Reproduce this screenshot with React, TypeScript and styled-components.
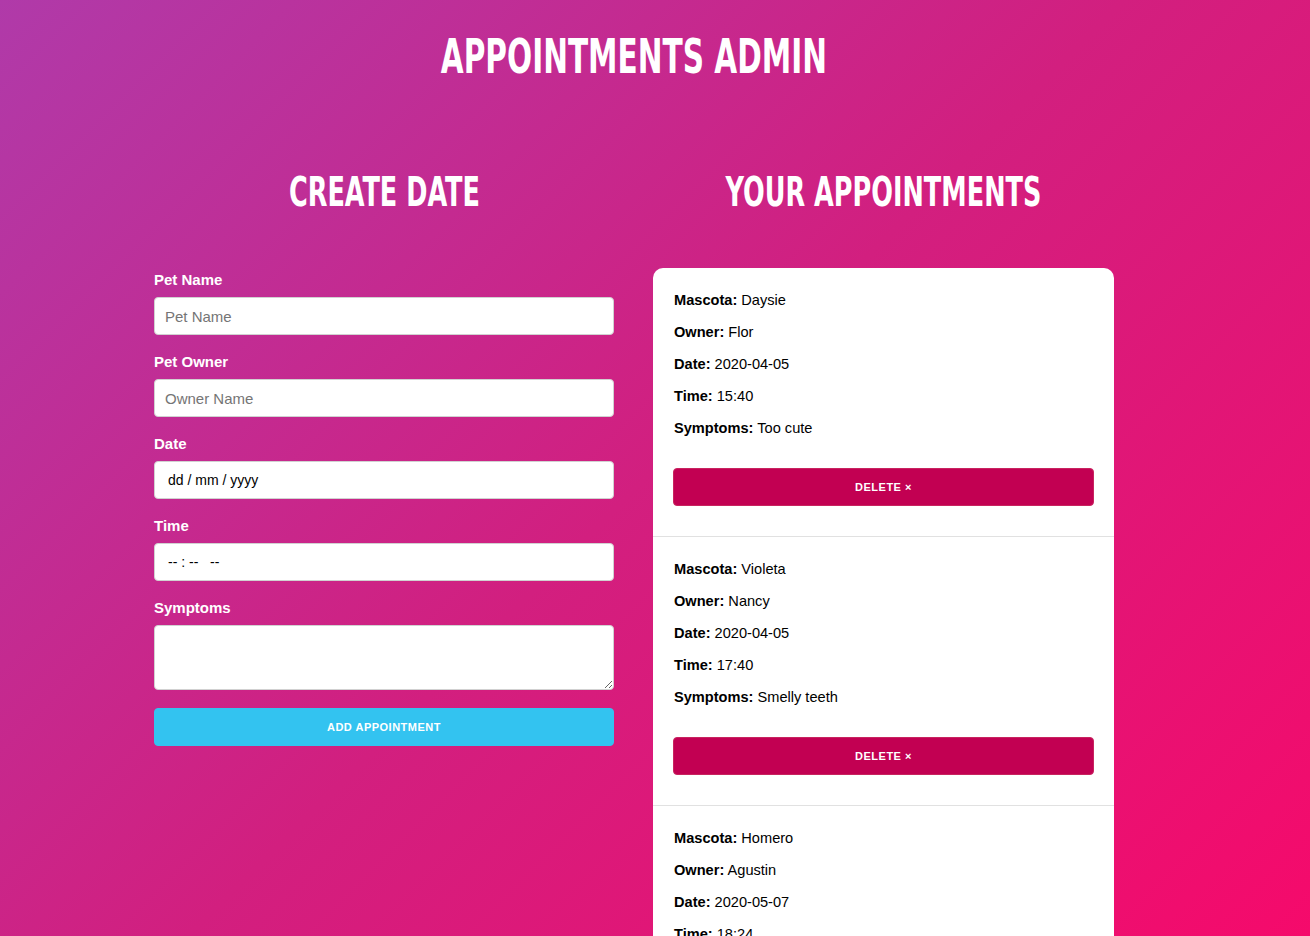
import React from "react";
import styled, { createGlobalStyle } from "styled-components";

const GlobalStyle = createGlobalStyle`
  html, body {
    margin: 0;
    padding: 0;
  }
  body {
    min-height: 100vh;
    font-family: "Liberation Sans", Arial, sans-serif;
    font-size: 15px;
    color: #222;
    background: linear-gradient(135deg, #b03aa9 0%, #d21f7f 50%, #f50a6b 100%);
    background-attachment: fixed;
  }
  * { box-sizing: border-box; }
`;

const Container = styled.div`
  width: 960px;
  margin-left: 154px;
  padding-top: 32px;
  padding-bottom: 40px;
`;

const Title = styled.h1`
  margin: 0;
  text-align: center;
  color: #fff;
  font-family: "Liberation Sans Narrow", "DejaVu Sans Condensed", "Liberation Sans", sans-serif;
  font-weight: 700;
  font-size: 48px;
  line-height: 48px;
  text-transform: uppercase;
`;

const Squeeze = styled.span<{ $scale: number }>`
  display: inline-block;
  transform: scaleX(${(p) => p.$scale});
  transform-origin: center;
  white-space: nowrap;
`;

const Columns = styled.div`
  display: grid;
  grid-template-columns: 460px 461px;
  column-gap: 39px;
  margin-top: 92px;
  align-items: start;
`;

const Column = styled.section`
  display: flex;
  flex-direction: column;
`;

const Heading = styled.h2`
  margin: 0 0 56px;
  text-align: center;
  color: #fff;
  font-family: "Liberation Sans Narrow", "DejaVu Sans Condensed", "Liberation Sans", sans-serif;
  font-weight: 700;
  font-size: 40px;
  line-height: 40px;
  text-transform: uppercase;
`;

const Form = styled.form`
  display: flex;
  flex-direction: column;
`;

const Label = styled.label`
  display: block;
  color: #fff;
  font-weight: 700;
  font-size: 15px;
  line-height: 24px;
  margin-bottom: 5px;
`;

const Input = styled.input<{ $inset?: boolean }>`
  display: block;
  width: 100%;
  height: 38px;
  padding: ${(p) => (p.$inset ? "6px 10px 6px 13px" : "6px 10px")};
  margin: 0 0 15px;
  border: 1px solid #d1d1d1;
  border-radius: 4px;
  background: #fff;
  font-family: "Liberation Sans", Arial, sans-serif;
  font-size: ${(p) => (p.$inset ? "14px" : "15px")};
  color: #000;
  outline: none;
  &::placeholder {
    color: #757575;
  }
`;

const TextArea = styled.textarea`
  display: block;
  width: 100%;
  height: 65px;
  min-height: 65px;
  padding: 6px 10px;
  margin: 0 0 18px;
  border: 1px solid #d1d1d1;
  border-radius: 4px;
  background: #fff;
  font-family: "Liberation Sans", Arial, sans-serif;
  font-size: 15px;
  outline: none;
  resize: vertical;
`;

const Button = styled.button<{ $variant: "primary" | "danger" }>`
  display: flex;
  align-items: center;
  justify-content: center;
  width: 100%;
  height: 38px;
  padding: 0 30px;
  border-radius: 4px;
  border: 1px solid ${(p) => (p.$variant === "primary" ? "#33c3f0" : "#c8245f")};
  background: ${(p) => (p.$variant === "primary" ? "#33c3f0" : "#c20052")};
  color: #fff;
  font-family: "Liberation Sans", Arial, sans-serif;
  font-size: 11px;
  font-weight: 700;
  letter-spacing: 0.5px;
  text-transform: uppercase;
  cursor: pointer;
`;

const Card = styled.div`
  background: #fff;
  border-radius: 10px;
  overflow: hidden;
`;

const Item = styled.article`
  padding: 20px 20px 30px;
  border-bottom: 1px solid #e1e1e1;
  &:last-child {
    border-bottom: none;
  }
`;

const Line = styled.p`
  margin: 0 0 8px;
  padding-left: 1px;
  font-size: 14.6px;
  line-height: 24px;
  color: #000;
  & strong {
    font-weight: 700;
  }
`;

const Actions = styled.div`
  margin-top: 28px;
`;

type Appointment = {
  pet: string;
  owner: string;
  date: string;
  time: string;
  symptoms: string;
};

const appointments: Appointment[] = [
  { pet: "Daysie", owner: "Flor", date: "2020-04-05", time: "15:40", symptoms: "Too cute" },
  { pet: "Violeta", owner: "Nancy", date: "2020-04-05", time: "17:40", symptoms: "Smelly teeth" },
  { pet: "Homero", owner: "Agustin", date: "2020-05-07", time: "18:24", symptoms: "Not eating" },
];

export default function App() {
  return (
    <>
      <GlobalStyle />
      <Container>
        <Title>
          <Squeeze $scale={0.685}>Appointments Admin</Squeeze>
        </Title>
        <Columns>
          <Column>
            <Heading>
              <Squeeze $scale={0.71}>Create Date</Squeeze>
            </Heading>
            <Form onSubmit={(e) => e.preventDefault()}>
              <Label>Pet Name</Label>
              <Input type="text" placeholder="Pet Name" />
              <Label>Pet Owner</Label>
              <Input type="text" placeholder="Owner Name" />
              <Label>Date</Label>
              <Input type="text" $inset defaultValue="dd / mm / yyyy" />
              <Label>Time</Label>
              <Input type="text" $inset defaultValue="-- : --   --" />
              <Label>Symptoms</Label>
              <TextArea />
              <Button type="submit" $variant="primary">Add Appointment</Button>
            </Form>
          </Column>
          <Column>
            <Heading>
              <Squeeze $scale={0.71}>Your Appointments</Squeeze>
            </Heading>
            <Card>
              {appointments.map((a) => (
                <Item key={a.pet}>
                  <Line><strong>Mascota:</strong> {a.pet}</Line>
                  <Line><strong>Owner:</strong> {a.owner}</Line>
                  <Line><strong>Date:</strong> {a.date}</Line>
                  <Line><strong>Time:</strong> {a.time}</Line>
                  <Line><strong>Symptoms:</strong> {a.symptoms}</Line>
                  <Actions>
                    <Button type="button" $variant="danger">Delete &times;</Button>
                  </Actions>
                </Item>
              ))}
            </Card>
          </Column>
        </Columns>
      </Container>
    </>
  );
}
